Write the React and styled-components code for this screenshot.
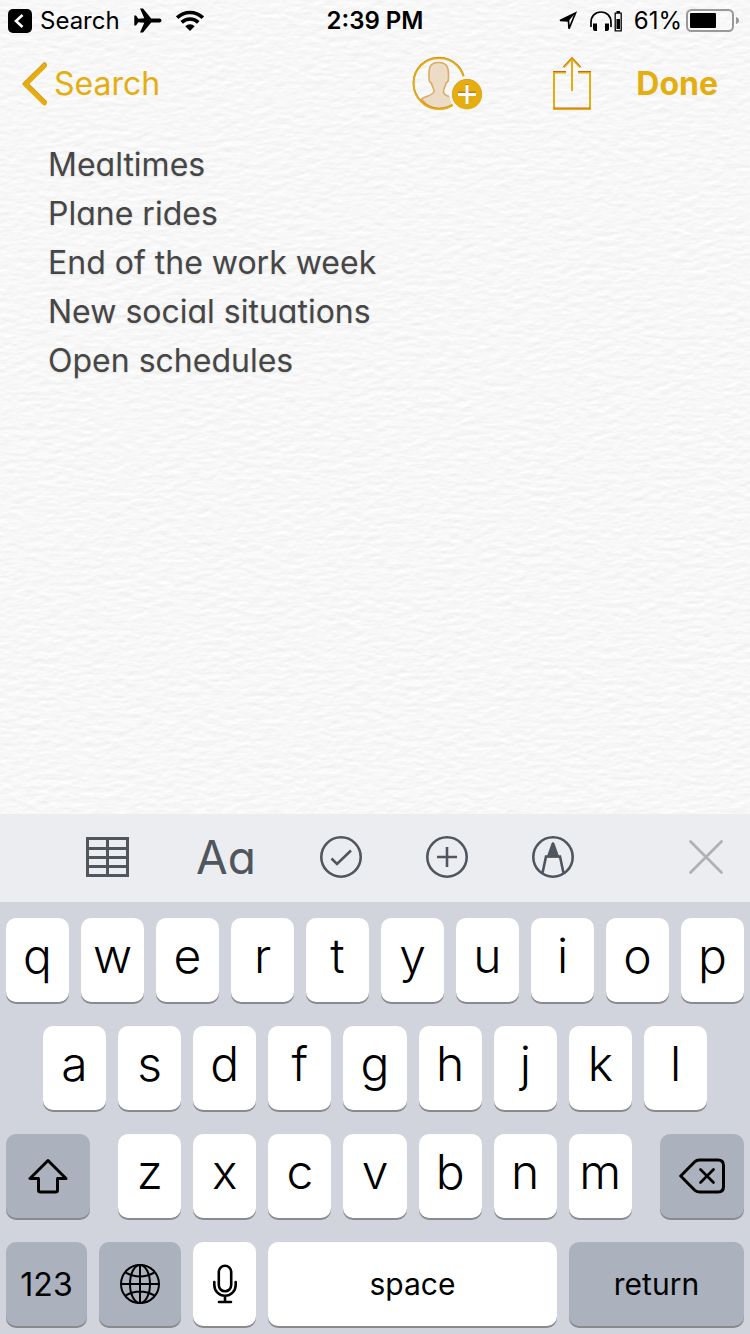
import React from "react";
import styled, { createGlobalStyle, css } from "styled-components";

const gold = "#e5ae10";
const slate = "#50565e";

const GlobalStyle = createGlobalStyle`
  * { box-sizing: border-box; }
  body { margin: 0; background: #d1d4dc; }
  button, textarea { font: inherit; color: inherit; background: none; border: 0; padding: 0; margin: 0; }
  button { cursor: pointer; }
  svg { display: block; flex: none; }
`;

const Screen = styled.div`
  display: flex;
  flex-direction: column;
  min-height: 100vh;
  font-family: Inter, Roboto, "Liberation Sans", sans-serif;
  color: #000;
`;

const Paper = styled.main`
  position: relative;
  isolation: isolate;
  flex: 1;
  display: flex;
  flex-direction: column;
  background: #f7f7f7;
`;

const Texture = styled.svg`
  position: absolute;
  inset: 0;
  width: 100%;
  height: 100%;
  z-index: -1;
`;

const StatusBar = styled.header`
  display: grid;
  grid-template-columns: 1fr auto 1fr;
  align-items: center;
  height: 40px;
  padding: 2px 8px 0;
  font-size: 24px;
  line-height: 38px;
`;

const StatusGroup = styled.div`
  display: flex;
  align-items: center;
  gap: ${(p) => p.$gap}px;
  justify-content: ${(p) => (p.$end ? "flex-end" : "flex-start")};
`;

const ReturnButton = styled.button`
  display: flex;
  align-items: center;
  gap: 8px;
`;

const Clock = styled.time`
  font-weight: 600;
`;

const NavBar = styled.nav`
  display: flex;
  align-items: center;
  height: 88px;
  padding: 0 32px 0 22px;
  color: ${gold};
  font-size: 32px;
  line-height: 44px;
  text-shadow: 0 -1px 0 #d98a1c;
`;

const NavButton = styled.button`
  display: flex;
  align-items: center;
  gap: 6px;
  font-weight: ${(p) => (p.$strong ? 700 : 400)};
`;

const NavActions = styled.div`
  display: flex;
  align-items: center;
  gap: 44px;
  margin-left: auto;
`;

const ShareGroup = styled.div`
  display: flex;
  align-items: center;
  gap: 68px;
`;

const NoteText = styled.textarea`
  flex: 1;
  width: 100%;
  padding: 12px 48px;
  resize: none;
  outline: none;
  overflow: hidden;
  color: #464646;
  font-size: 32px;
  line-height: 49px;
  font-feature-settings: "cv11";
  text-shadow: 0 1px 2px #dcdcdc;
`;

const Toolbar = styled.div`
  display: flex;
  align-items: center;
  gap: 64px;
  height: 88px;
  padding: 0 26px 2px 86px;
  background: #ecedf1;
  color: ${slate};
`;

const ToolButton = styled.button`
  ${(p) => p.$last && css`margin-left: auto; color: #b0b1b4;`}
`;

const FormatButton = styled(ToolButton)`
  width: 63px;
  font-size: 46px;
  line-height: 56px;
  text-align: right;
  font-feature-settings: "cv11";
`;

const Keyboard = styled.section`
  display: grid;
  gap: 24px;
  padding: 16px 6px 8px;
  background: #d1d4dc;
`;

const KeyRow = styled.div`
  display: grid;
  grid-template-columns: ${(p) => p.$columns};
  gap: 12px;
  padding: 0 ${(p) => (p.$inset ? "5%" : "0")};
`;

const Key = styled.button`
  display: flex;
  align-items: center;
  justify-content: center;
  min-width: 0;
  height: 84px;
  border-radius: 10px;
  background: ${(p) => (p.$dark ? "#abb1bd" : "#fff")};
  box-shadow: 0 2px 0 #888a8e;
  font-size: ${(p) => (p.$word ? 30 : 48)}px;
  font-weight: ${(p) => (p.$word ? 400 : 300)};
  padding-bottom: ${(p) => (p.$word ? 0 : 10)}px;
`;

const NumberKey = styled(Key)`
  font-size: 32px;
`;

const ShiftKey = styled(Key)`
  margin-right: 16px;
  padding: 0;
`;

const DeleteKey = styled(Key)`
  margin-left: 16px;
  padding: 0;
`;

const PaperTexture = () => (
  <Texture aria-hidden="true">
    <filter id="paper" x="0" y="0" width="100%" height="100%" colorInterpolationFilters="sRGB">
      <feTurbulence type="fractalNoise" baseFrequency="0.08 0.18" numOctaves="3" seed="4" />
      <feColorMatrix values="0 0 0 0 0  0 0 0 0 0  0 0 0 0 0  1 0 0 0 0" />
      <feDiffuseLighting surfaceScale="0.16" diffuseConstant="1.12" lightingColor="#fff">
        <feDistantLight azimuth="260" elevation="60" />
      </feDiffuseLighting>
    </filter>
    <rect width="100%" height="100%" filter="url(#paper)" />
  </Texture>
);

const ReturnIcon = () => (
  <svg width="24" height="24" viewBox="0 0 24 24" aria-hidden="true">
    <rect width="24" height="24" rx="5" fill="#000" />
    <path d="M14.500 6 8 12l6.500 6" fill="none" stroke="#fff" strokeWidth="2.600" />
  </svg>
);

const PlaneIcon = () => (
  <svg width="28" height="26" viewBox="0 0 28 26" aria-hidden="true">
    <path d="M27.500 12.500c0-1.500-1.300-2-3-2H17.200L9 .5H6l4.300 9.800-6 .5L2 7.500H.3V17.500H2l2.300-3.300 6 .5L6 24.500h3l8.200-10h7.300c1.700 0 3-.5 3-2z" />
  </svg>
);

const WifiIcon = () => (
  <svg width="28" height="22" viewBox="0 0 28 22" aria-hidden="true">
    <g fill="none" stroke="#000" strokeWidth="3.600">
      <path d="M1.200 7.700a18.200 18.200 0 0 1 25.600 0" />
      <path d="M5.700 12.400a11.800 11.800 0 0 1 16.600 0" />
    </g>
    <path d="M9.300 16.300a6.700 6.700 0 0 1 9.400 0L14 21z" />
  </svg>
);

const LocationIcon = () => (
  <svg width="20" height="20" viewBox="0 0 20 20" aria-hidden="true">
    <path d="M17.500 2 2 9.500l8.500.3.500 8z" fill="none" stroke="#000" strokeWidth="1.700" />
    <path d="M17.500 2 10.500 10 2 9.500z" />
  </svg>
);

const HeadphonesIcon = () => (
  <svg width="34" height="22" viewBox="0 0 34 22" aria-hidden="true">
    <path d="M2 17v-4.500C2 6 6 2 12 2s10 4 10 10.500V17" fill="none" stroke="#000" strokeWidth="1.700" />
    <path d="M4 13.500h4V21H6q-2 0-2-2zM16 13.500h4V19q0 2-2 2h-2z" />
    <path d="M26.200 3.200h6v17.600h-6z" fill="none" stroke="#000" strokeWidth="1.300" />
    <path d="M27.500 1h3.500v2h-3.500zM27.500 9h3.500v10h-3.500z" />
  </svg>
);

const BatteryIcon = () => (
  <svg width="56" height="24" viewBox="0 0 56 24" aria-hidden="true">
    <rect x="1" y="1" width="46" height="21" rx="4.500" fill="none" stroke="#999" strokeWidth="2" />
    <rect x="4" y="4" width="26" height="15" rx="1" />
    <path d="M50 8q3 1 3 3.500T50 15z" fill="#999" />
  </svg>
);

const BackIcon = () => (
  <svg width="26" height="44" viewBox="0 0 26 44" fill="none" strokeWidth="4.600" strokeLinecap="round" aria-hidden="true">
    <path d="M22.500 2.800 3.500 21.500l19 18.700" stroke="#d98a1c" />
    <path d="m22.500 3.800-19 18.700 19 18.700" stroke={gold} />
  </svg>
);

const ContactIcon = () => (
  <svg width="72" height="56" viewBox="0 0 72 56" aria-hidden="true">
    <path
      d="M9.500 43c2.500-2.500 12-3.500 12.500-7.500.2-3-2-5-2.600-8.500-1.800-.5-2.500-3-2.400-6-.2-7-.5-14.500 9.500-14.500S36.700 14 36.500 21c.1 3-.6 5.500-2.400 6-.6 3.500-2.800 5.500-2.600 8.500.3 3 3.500 4.500 6 5 1 4 3 6 4.500 7-7 7-22 9-32.500-4.500z"
      fill="#ecdcc6"
      stroke="#dcaa62"
      strokeWidth="1.600"
    />
    <circle cx="27" cy="27" r="25.500" fill="none" stroke="#cf731c" strokeWidth="1.700" />
    <circle cx="27" cy="27.600" r="25.500" fill="none" stroke={gold} strokeWidth="1.700" />
    <circle cx="55" cy="38" r="18" fill="#f7f7f7" />
    <circle cx="55" cy="38" r="15" fill="#d98a1c" />
    <circle cx="55" cy="38.500" r="15" fill={gold} />
    <path d="M46 37h18M55 28v19" stroke="#cf731c" strokeWidth="3" />
    <path d="M46 38.500h18M55 29v19" stroke="#fff" strokeWidth="3" />
  </svg>
);

const ShareIcon = () => (
  <svg width="40" height="56" viewBox="0 0 40 56" fill="none" stroke={gold} strokeWidth="2" aria-hidden="true">
    <path d="M14 16.500H2v36.500h36V16.500H26M20 35V3" />
    <path d="m11.500 11.500 8.500-9 8.500 9" />
    <path d="M1 15.500h13M26 15.500h13M2 52h36M11.500 10.500l8.500-9 8.500 9" stroke="#c9661c" strokeWidth="1" />
  </svg>
);

const TableIcon = () => (
  <svg width="43" height="40" viewBox="0 0 43 40" fill="none" stroke="currentColor" strokeWidth="3" aria-hidden="true">
    <path d="M1.500 1.500h40v37h-40zM21.500 1.500v37M1.500 11.500h40M1.500 20.500h40M1.500 29.500h40" />
  </svg>
);

const CircleIcon = ({ children }) => (
  <svg width="42" height="42" viewBox="0 0 42 42" fill="none" stroke="currentColor" strokeWidth="2.600" aria-hidden="true">
    <circle cx="21" cy="21" r="19.700" />
    {children}
  </svg>
);

const CloseIcon = () => (
  <svg width="36" height="36" viewBox="0 0 36 36" fill="none" stroke="currentColor" strokeWidth="2.800" strokeLinecap="round" aria-hidden="true">
    <path d="m2.500 2.500 31 31M33.500 2.500l-31 31" />
  </svg>
);

const ShiftIcon = () => (
  <svg width="40" height="36" viewBox="0 0 40 36" fill="none" stroke="#000" strokeWidth="3" strokeLinejoin="round" aria-hidden="true">
    <path d="M20 2.500 2 20.500h8.500V32q0 2 2 2h15q2 0 2-2V20.500H38z" />
  </svg>
);

const DeleteIcon = () => (
  <svg width="46" height="36" viewBox="0 0 46 36" fill="none" stroke="#000" strokeWidth="3" strokeLinejoin="round" aria-hidden="true">
    <path d="M1.700 18 15.500 4q2-2 5-2H39q5.500 0 5.500 5.500v21Q44.500 34 39 34H20.500q-3 0-5-2z" />
    <path d="m21.500 11.500 13 13M34.500 11.500l-13 13" strokeLinecap="round" strokeWidth="2.700" />
  </svg>
);

const GlobeIcon = () => (
  <svg width="42" height="42" viewBox="0 0 42 42" fill="none" stroke="#000" strokeWidth="2" aria-hidden="true">
    <circle cx="21" cy="21" r="19" />
    <ellipse cx="21" cy="21" rx="10" ry="19" />
    <path d="M21 2v38M2 21h38M6.500 9.500Q21 17.500 35.500 9.500M6.500 32.500Q21 24.500 35.500 32.500" />
  </svg>
);

const MicIcon = () => (
  <svg width="26" height="40" viewBox="0 0 26 40" fill="none" stroke="#000" strokeWidth="2.600" strokeLinecap="round" aria-hidden="true">
    <rect x="6.800" y="1.800" width="12.400" height="25.500" rx="6.200" />
    <path d="M2.300 18v3a10.700 10.700 0 0 0 21.400 0v-3M13 32v5.500M7 38h12" />
  </svg>
);

const note = [
  "Mealtimes",
  "Plane rides",
  "End of the work week",
  "New social situations",
  "Open schedules",
].join("\n");

const Letters = ({ row }) =>
  row.split("").map((letter) => <Key key={letter}>{letter}</Key>);

export default function App() {
  return (
    <Screen>
      <GlobalStyle />
      <Paper>
        <PaperTexture />
        <StatusBar>
          <StatusGroup $gap={14}>
            <ReturnButton>
              <ReturnIcon />
              Search
            </ReturnButton>
            <PlaneIcon />
            <WifiIcon />
          </StatusGroup>
          <Clock>2:39 PM</Clock>
          <StatusGroup $gap={11} $end>
            <LocationIcon />
            <HeadphonesIcon />
            <StatusGroup $gap={4}>
              <span>61%</span>
              <BatteryIcon />
            </StatusGroup>
          </StatusGroup>
        </StatusBar>
        <NavBar>
          <NavButton>
            <BackIcon />
            Search
          </NavButton>
          <NavActions>
            <ShareGroup>
              <NavButton aria-label="Add people"><ContactIcon /></NavButton>
              <NavButton aria-label="Share"><ShareIcon /></NavButton>
            </ShareGroup>
            <NavButton $strong>Done</NavButton>
          </NavActions>
        </NavBar>
        <NoteText aria-label="Note" defaultValue={note} spellCheck={false} />
      </Paper>
      <Toolbar role="toolbar" aria-label="Formatting">
        <ToolButton aria-label="Table"><TableIcon /></ToolButton>
        <FormatButton>Aa</FormatButton>
        <ToolButton aria-label="Checklist">
          <CircleIcon><path d="m11.500 22.500 5.500 5.500 14-13.500" /></CircleIcon>
        </ToolButton>
        <ToolButton aria-label="Add attachment">
          <CircleIcon><path d="M21 11v20M11 21h20" /></CircleIcon>
        </ToolButton>
        <ToolButton aria-label="Draw">
          <CircleIcon>
            <path d="m10.500 37 3.500-16.500h14L31.500 37" />
            <path d="M19.500 7.500q1.500-3 3 0L27.500 21.500h-13z" fill="currentColor" stroke="none" />
          </CircleIcon>
        </ToolButton>
        <ToolButton $last aria-label="Close toolbar"><CloseIcon /></ToolButton>
      </Toolbar>
      <Keyboard aria-label="Keyboard">
        <KeyRow $columns="repeat(10, 1fr)">
          <Letters row="qwertyuiop" />
        </KeyRow>
        <KeyRow $columns="repeat(9, 1fr)" $inset>
          <Letters row="asdfghjkl" />
        </KeyRow>
        <KeyRow $columns="100fr repeat(7, 63fr) 100fr">
          <ShiftKey $dark aria-label="Shift"><ShiftIcon /></ShiftKey>
          <Letters row="zxcvbnm" />
          <DeleteKey $dark aria-label="Delete"><DeleteIcon /></DeleteKey>
        </KeyRow>
        <KeyRow $columns="81fr 82fr 63fr 289fr 175fr">
          <NumberKey $dark $word>123</NumberKey>
          <Key $dark $word aria-label="Next keyboard"><GlobeIcon /></Key>
          <Key $word aria-label="Dictate"><MicIcon /></Key>
          <Key $word>space</Key>
          <Key $dark $word>return</Key>
        </KeyRow>
      </Keyboard>
    </Screen>
  );
}
